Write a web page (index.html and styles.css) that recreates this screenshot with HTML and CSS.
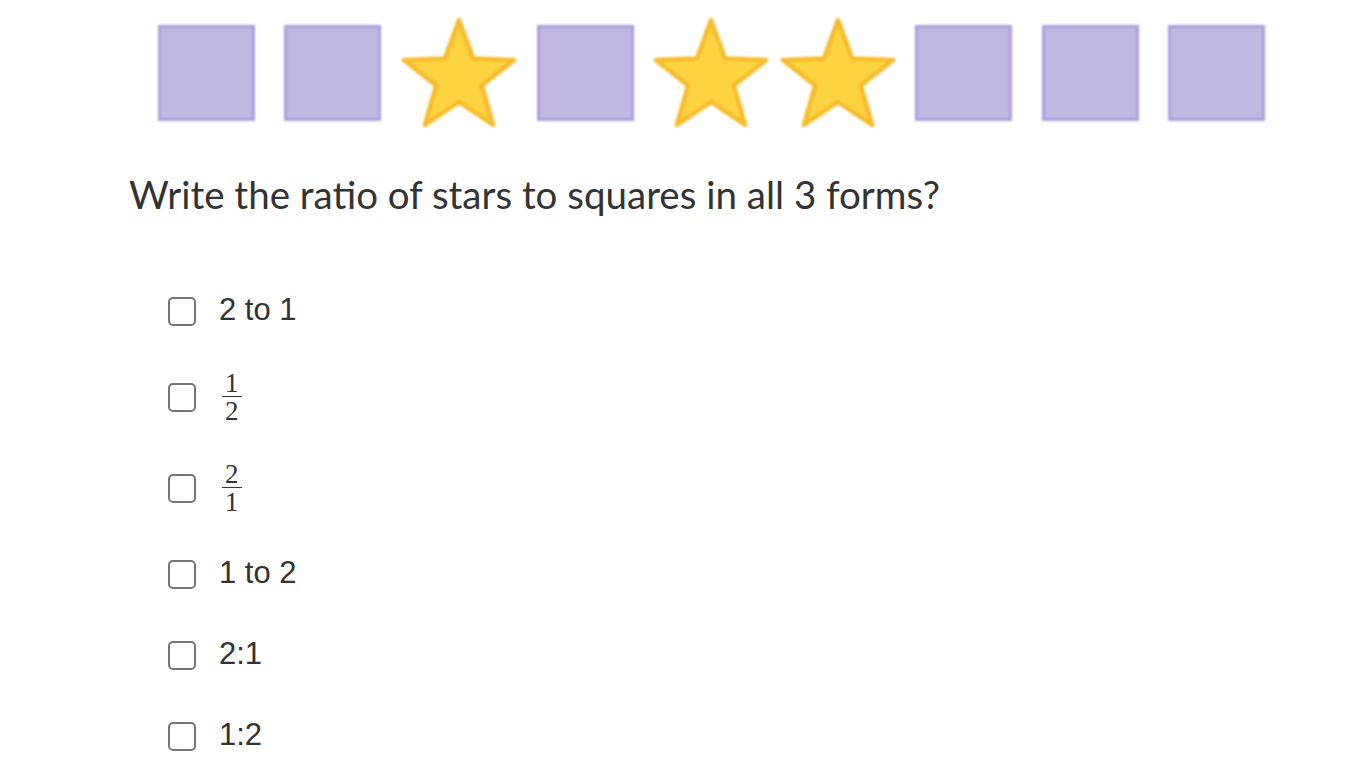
FILE: index.html
```html
<!DOCTYPE html>
<html lang="en">
<head>
<meta charset="utf-8">
<title>Ratio question</title>
<link rel="stylesheet" href="styles.css">
</head>
<body>
<main class="page">
  <div class="shapes">
    <div class="cell"><div class="square"></div></div>
    <div class="cell"><div class="square"></div></div>
    <div class="cell"><svg class="star" viewBox="0 0 126 126"><polygon points="63,11 77.11,49.58 118.16,51.08 85.83,76.42 97.09,115.92 63,93 28.91,115.92 40.17,76.42 7.84,51.08 48.89,49.58"/></svg></div>
    <div class="cell"><div class="square"></div></div>
    <div class="cell"><svg class="star" viewBox="0 0 126 126"><polygon points="63,11 77.11,49.58 118.16,51.08 85.83,76.42 97.09,115.92 63,93 28.91,115.92 40.17,76.42 7.84,51.08 48.89,49.58"/></svg></div>
    <div class="cell"><svg class="star" viewBox="0 0 126 126"><polygon points="63,11 77.11,49.58 118.16,51.08 85.83,76.42 97.09,115.92 63,93 28.91,115.92 40.17,76.42 7.84,51.08 48.89,49.58"/></svg></div>
    <div class="cell"><div class="square"></div></div>
    <div class="cell"><div class="square"></div></div>
    <div class="cell"><div class="square"></div></div>
  </div>

  <h1 class="question">Write the ratio of stars to squares in all 3 forms?</h1>

  <ul class="options">
    <li class="option text-row"><span class="box"></span><span class="label">2 to 1</span></li>
    <li class="option frac-row"><span class="box"></span><span class="frac"><span class="num">1</span><span class="den">2</span></span></li>
    <li class="option frac-row"><span class="box"></span><span class="frac"><span class="num">2</span><span class="den">1</span></span></li>
    <li class="option text-row"><span class="box"></span><span class="label">1 to 2</span></li>
    <li class="option text-row"><span class="box"></span><span class="label">2:1</span></li>
    <li class="option text-row"><span class="box"></span><span class="label">1:2</span></li>
  </ul>
</main>
</body>
</html>
```

FILE: styles.css
```css
html, body {
  margin: 0;
  padding: 0;
  background: #ffffff;
}

.page {
  display: flex;
  flex-direction: column;
  height: 768px;
  overflow: hidden;
}

.shapes {
  display: flex;
  margin: 9px 0 0 143px;
}

.cell {
  width: 126.3px;
  height: 126px;
  display: flex;
  align-items: center;
  justify-content: center;
  flex: none;
}

.square {
  width: 91px;
  height: 90px;
  margin-top: 1px;
  background: #c1b7e3;
  border: 3px solid #ad9fdc;
  filter: blur(1.2px);
}

.star {
  width: 126px;
  height: 126px;
  display: block;
  filter: blur(0.8px);
}

.star polygon {
  fill: #fcd340;
  stroke: #f7bc2c;
  stroke-width: 4.5;
  stroke-linejoin: round;
}

.question {
  margin: 36px 0 0 129px;
  font-family: Lato, "Liberation Sans", sans-serif;
  font-weight: 400;
  font-size: 38.5px;
  line-height: 46px;
  color: #333333;
}

.options {
  list-style: none;
  margin: 77px 0 0 168px;
  padding: 0;
  display: flex;
  flex-direction: column;
  gap: 47px;
}

.option {
  display: flex;
  align-items: center;
  gap: 23px;
}

.text-row {
  height: 34px;
}

.frac-row {
  height: 44px;
}

.box {
  box-sizing: border-box;
  width: 28px;
  height: 29px;
  border: 2px solid #767676;
  border-radius: 5px;
  flex: none;
}

.label {
  font-family: "Liberation Sans", Arial, sans-serif;
  font-size: 31px;
  line-height: 34px;
  padding-bottom: 2px;
  color: #333333;
}

.frac {
  display: inline-flex;
  flex-direction: column;
  align-items: center;
  margin-left: 3px;
  font-family: "Liberation Serif", "DejaVu Serif", serif;
  font-size: 27px;
  line-height: 26px;
  color: #333333;
}

.num {
  padding: 0 3px;
  border-bottom: 1px solid #333333;
}

.den {
  padding: 1px 3px 0;
}
```
